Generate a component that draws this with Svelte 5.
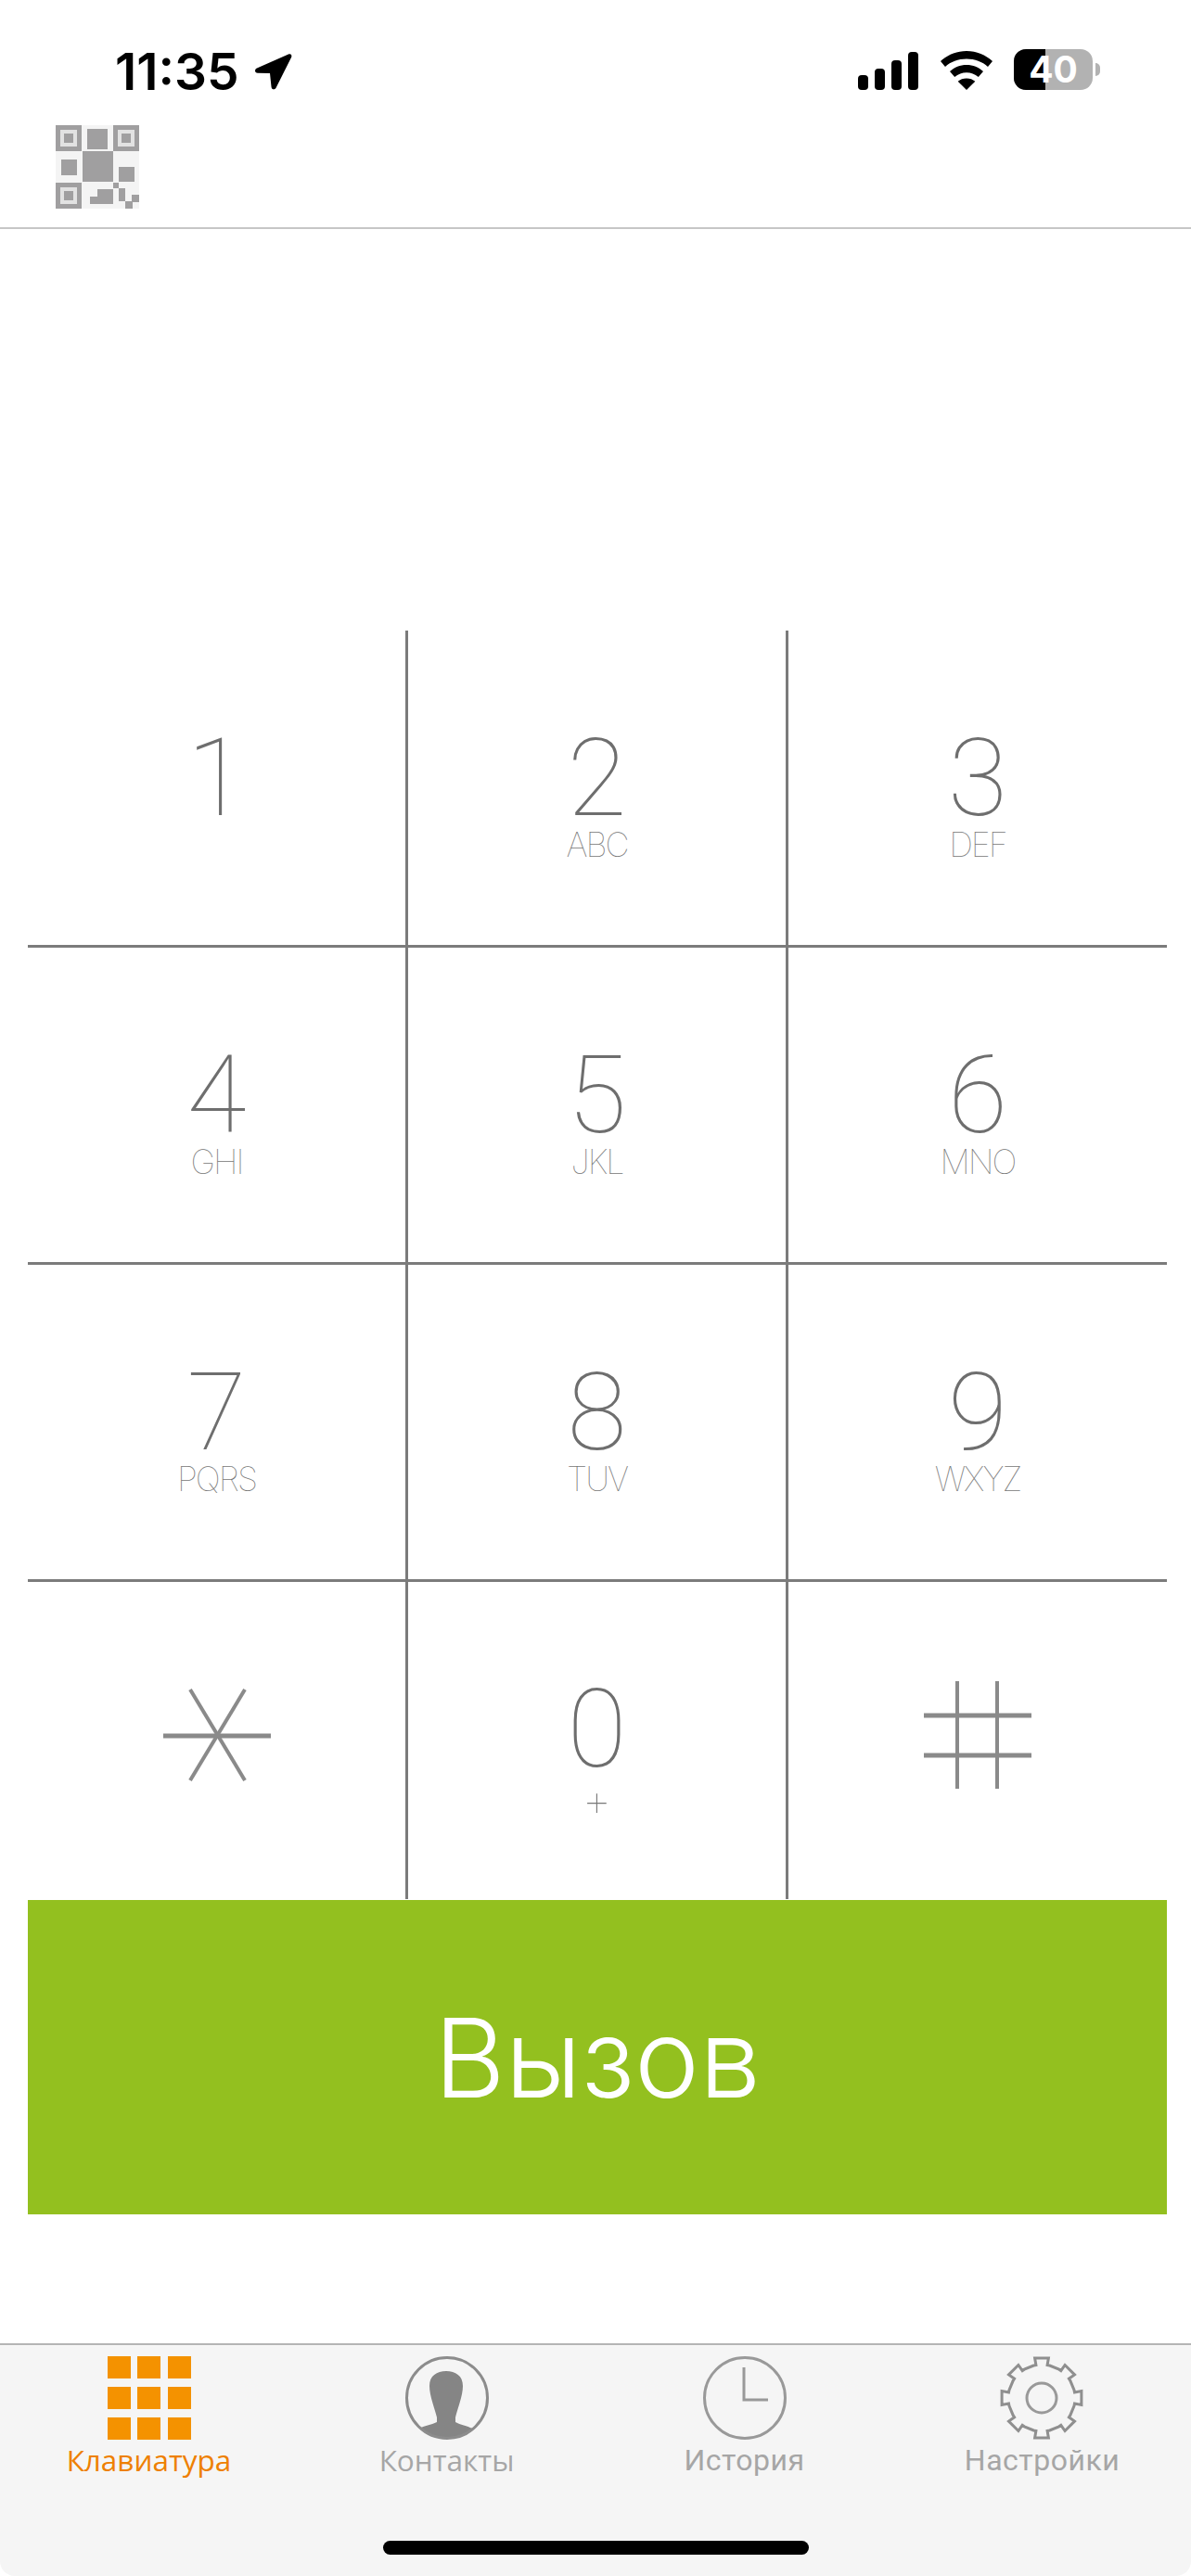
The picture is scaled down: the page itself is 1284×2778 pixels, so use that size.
<script>
  const keys = [
    { digit: '1', sub: '' },
    { digit: '2', sub: 'ABC' },
    { digit: '3', sub: 'DEF' },
    { digit: '4', sub: 'GHI' },
    { digit: '5', sub: 'JKL' },
    { digit: '6', sub: 'MNO' },
    { digit: '7', sub: 'PQRS' },
    { digit: '8', sub: 'TUV' },
    { digit: '9', sub: 'WXYZ' },
    { digit: '*', sub: '' },
    { digit: '0', sub: '+' },
    { digit: '#', sub: '' },
  ];

  // 8 toothed gear outline, centred on 45,45
  function gearPath() {
    const pts = [];
    for (let i = 0; i < 8; i++) {
      const a = (i * Math.PI) / 4 - Math.PI / 2;
      const at = (r, off) => {
        const x = 45 + r * Math.cos(a + off);
        const y = 45 + r * Math.sin(a + off);
        return x.toFixed(1) + ' ' + y.toFixed(1);
      };
      pts.push(at(36, -0.24), at(36, -0.17), at(43.5, -0.17), at(43.5, 0.17), at(36, 0.17), at(36, 0.24));
    }
    return 'M' + pts.join('L') + 'Z';
  }
</script>

<div class="screen">
  <div class="status">
    <div class="time-wrap">
      <span class="time">11:35</span>
      <svg class="arrow" viewBox="0 0 41 40" width="41" height="40">
        <path d="M37 1.5 3 16.5c-3 1.500-2.500 5 .8 5.200L17 22l1.500 14.500c.3 3.500 4 3.800 5.300.8L40 5c1.200-2.500-.6-4.500-3-3.500Z" fill="#000" />
      </svg>
    </div>
    <div class="indicators">
      <div class="signal">
        <span class="bar b1"></span>
        <span class="bar b2"></span>
        <span class="bar b3"></span>
        <span class="bar b4"></span>
      </div>
      <svg class="wifi" viewBox="0 0 58 42" width="58" height="42">
        <path d="M29 0C18 0 8.500 4.200 1 11l5 6C12 11.500 20 8.500 29 8.500S46 11.500 52 17l5-6C49.500 4.200 40 0 29 0Z" fill="#000" />
        <path d="M29 15c-7 0-13 2.600-18 7l5.200 6C20 25 24.300 23.300 29 23.300S38 25 41.800 28l5.200-6C42 17.600 36 15 29 15Z" fill="#000" />
        <path d="M29 29.500c-3.600 0-6.800 1.200-9.300 3.300L29 42l9.300-9.200c-2.500-2.100-5.700-3.300-9.300-3.300Z" fill="#000" />
      </svg>
      <div class="battery">
        <div class="cell"><span class="fill"></span><span class="pct">40</span></div>
        <span class="nub"></span>
      </div>
    </div>
  </div>

  <div class="toolbar">
    <svg class="qr" viewBox="0 0 90 90" width="90" height="90">
      <rect width="90" height="90" fill="#f4f4f4" />
      <g fill="#a09fa0">
        <rect width="28" height="28" />
        <rect x="62" width="28" height="28" />
        <rect y="62" width="28" height="28" />
        <rect x="34" y="4" width="22" height="22" />
        <rect x="6" y="37" width="17" height="17" />
        <rect x="29" y="28" width="33" height="33" />
        <rect x="68" y="45" width="17" height="16" />
        <rect x="45" y="69" width="17" height="16" />
        <rect x="37" y="77" width="8" height="8" />
        <rect x="62" y="62" width="6" height="6" />
        <rect x="68" y="68" width="7" height="14" />
        <rect x="75" y="82" width="8" height="8" />
        <rect x="82" y="75" width="8" height="8" />
      </g>
      <g fill="#e2e2e2">
        <path d="M5 5h18v18H5zM9 9v10h10V9z" fill-rule="evenodd" />
        <path d="M67 5h18v18H67zM71 9v10h10V9z" fill-rule="evenodd" />
        <path d="M5 67h18v18H5zM9 71v10h10V71z" fill-rule="evenodd" />
      </g>
    </svg>
  </div>

  <div class="display"></div>

  <div class="keypad">
    {#each keys as key}
      <button class="key">
        {#if key.digit === '*'}
          <svg class="sym star" viewBox="0 0 116 100" width="116" height="100" aria-label="*">
            <line x1="0" y1="51" x2="116" y2="51" stroke="#8a8a8a" stroke-width="5" />
            <line x1="29" y1="1" x2="88" y2="99" stroke="#8a8a8a" stroke-width="4" />
            <line x1="88" y1="1" x2="29" y2="99" stroke="#8a8a8a" stroke-width="4" />
          </svg>
        {:else if key.digit === '#'}
          <svg class="sym hash" viewBox="0 0 116 116" width="116" height="116" aria-label="#">
            <line x1="36" y1="0" x2="36" y2="116" stroke="#8a8a8a" stroke-width="4" />
            <line x1="79" y1="0" x2="79" y2="116" stroke="#8a8a8a" stroke-width="4" />
            <line x1="0" y1="37" x2="116" y2="37" stroke="#8a8a8a" stroke-width="5" />
            <line x1="0" y1="80" x2="116" y2="80" stroke="#8a8a8a" stroke-width="5" />
          </svg>
        {:else}
          <span class="digit">{key.digit}</span>
          <span class="sub" class:plus={key.sub === '+'}>{key.sub}</span>
        {/if}
      </button>
    {/each}
  </div>

  <button class="call">Вызов</button>

  <div class="spacer"></div>

  <nav class="tabs">
    <div class="tab active">
      <div class="grid-icon">
        {#each Array(9) as _}
          <span></span>
        {/each}
      </div>
      <span class="label open">Клавиатура</span>
    </div>
    <div class="tab">
      <svg viewBox="0 0 90 90" width="90" height="90">
        <defs>
          <clipPath id="round"><circle cx="45" cy="45" r="44" /></clipPath>
        </defs>
        <path clip-path="url(#round)" d="M44 16c-10 0-18 5-18 16 0 11 6 25 8 34v5c-6 3-14 4-19 7l-3 12h66l-6-12c-5-3-13-4-18-7v-5c2-9 8-23 8-34 0-11-8-16-18-16Z" fill="#858585" />
        <circle cx="45" cy="45" r="43.500" fill="none" stroke="#8c8c8c" stroke-width="3" />
      </svg>
      <span class="label open">Контакты</span>
    </div>
    <div class="tab">
      <svg viewBox="0 0 90 90" width="90" height="90">
        <circle cx="45" cy="45" r="43.500" fill="none" stroke="#999" stroke-width="3" />
        <path d="M44 12v35h26" fill="none" stroke="#999" stroke-width="3" />
      </svg>
      <span class="label">История</span>
    </div>
    <div class="tab">
      <svg viewBox="0 0 90 90" width="90" height="90">
        <path d={gearPath()} fill="none" stroke="#8f8f8f" stroke-width="3" />
        <circle cx="45" cy="45" r="16" fill="none" stroke="#999" stroke-width="3" />
      </svg>
      <span class="label">Настройки</span>
    </div>
    <div class="home"></div>
  </nav>
</div>

<style>
  :global(body) {
    margin: 0;
    background: #fff;
  }

  .screen {
    width: 1284px;
    height: 2778px;
    display: flex;
    flex-direction: column;
    font-family: 'Liberation Sans', sans-serif;
    overflow: hidden;
  }

  .status {
    height: 135px;
    box-sizing: border-box;
    padding: 53px 98px 0 124px;
    display: flex;
    justify-content: space-between;
    align-items: flex-start;
  }

  .time-wrap {
    display: flex;
    align-items: center;
    gap: 16px;
  }

  .time {
    font-family: Inter, sans-serif;
    font-size: 55px;
    font-weight: 600;
    line-height: 48px;
    color: #000;
  }

  .indicators {
    display: flex;
    align-items: flex-end;
    height: 44px;
  }

  .signal {
    display: flex;
    gap: 7px;
    align-items: flex-end;
    height: 43px;
    margin-right: 23px;
  }

  .bar {
    width: 11px;
    background: #000;
    border-radius: 4px;
  }

  .b1 { height: 16px; }
  .b2 { height: 23px; }
  .b3 { height: 32px; }
  .b4 { height: 41px; }

  .wifi {
    margin-right: 22px;
  }

  .battery {
    display: flex;
    align-items: center;
    gap: 3px;
  }

  .cell {
    width: 85px;
    height: 44px;
    border-radius: 13px;
    background: #b2b2b2;
    position: relative;
    display: flex;
    align-items: center;
    justify-content: center;
  }

  .fill {
    position: absolute;
    left: 0;
    top: 0;
    bottom: 0;
    width: 34px;
    background: #000;
    border-radius: 13px 0 0 13px;
  }

  .pct {
    position: relative;
    font-family: Inter, sans-serif;
    font-size: 39px;
    font-weight: 700;
    line-height: 44px;
    color: #fff;
  }

  .nub {
    width: 5px;
    height: 14px;
    background: #b2b2b2;
    border-radius: 0 5px 5px 0;
  }

  .toolbar {
    height: 112px;
    box-sizing: border-box;
    padding-left: 60px;
    border-bottom: 2px solid #c6c6c6;
  }

  .qr {
    display: block;
  }

  .display {
    height: 433px;
  }

  .keypad {
    margin: 0 26px 0 30px;
    display: grid;
    grid-template-columns: 410px 410px 1fr;
    grid-template-rows: repeat(4, 342px);
    height: 1369px;
  }

  .key {
    appearance: none;
    background: none;
    border: 0;
    margin: 0;
    display: flex;
    flex-direction: column;
    align-items: center;
    border-right: 3px solid #7b7b7b;
    border-bottom: 3px solid #7b7b7b;
    box-sizing: border-box;
    padding: 109px 0 0;
  }

  .key:nth-child(3n) {
    border-right: 0;
  }

  .key:nth-child(n + 10) {
    border-bottom: 0;
  }

  .key:nth-child(10) {
    padding-top: 115px;
  }

  .key:nth-child(12) {
    padding-top: 107px;
  }

  .digit {
    font-family: Roboto, sans-serif;
    font-weight: 100;
    font-size: 117px;
    line-height: 100px;
    color: #6e6e6e;
  }

  .sub {
    font-family: Inter, sans-serif;
    font-weight: 100;
    font-size: 36px;
    line-height: 44px;
    letter-spacing: -2px;
    color: #777;
  }

  .sub.plus {
    font-size: 50px;
    line-height: 52px;
    letter-spacing: 0;
  }

  .sym {
    display: block;
    flex-shrink: 0;
  }

  .call {
    appearance: none;
    border: 0;
    margin: 0 26px 0 30px;
    height: 339px;
    background: #93c01f;
    color: #fff;
    font-family: Inter, sans-serif;
    font-weight: 300;
    font-size: 118px;
    padding: 0;
  }

  .spacer {
    height: 139px;
  }

  .tabs {
    flex: 1;
    background: #f5f5f5;
    border-top: 2px solid #b5b5b5;
    border-radius: 0 0 16px 16px;
    display: grid;
    grid-template-columns: repeat(4, 1fr);
    grid-template-rows: auto auto;
    padding-top: 12px;
    justify-items: center;
    align-content: start;
  }

  .tab {
    display: flex;
    flex-direction: column;
    align-items: center;
    gap: 3px;
    color: #a6a6a6;
    font-family: Roboto, sans-serif;
    font-size: 32px;
    letter-spacing: 0.5px;
  }

  .tab svg {
    flex-shrink: 0;
  }

  .label {
    line-height: 38px;
  }

  .open {
    font-family: 'Open Sans', sans-serif;
    font-size: 31.5px;
    letter-spacing: 0;
  }

  .active {
    color: #ee8000;
  }

  .grid-icon {
    width: 90px;
    height: 90px;
    flex-shrink: 0;
    display: grid;
    grid-template-columns: repeat(3, 25px);
    grid-template-rows: repeat(3, 24px);
    justify-content: space-between;
    align-content: space-between;
  }

  .grid-icon span {
    background: #f49200;
  }

  .home {
    grid-column: 1 / -1;
    width: 459px;
    height: 15px;
    border-radius: 8px;
    background: #000;
    margin-top: 68px;
  }
</style>
